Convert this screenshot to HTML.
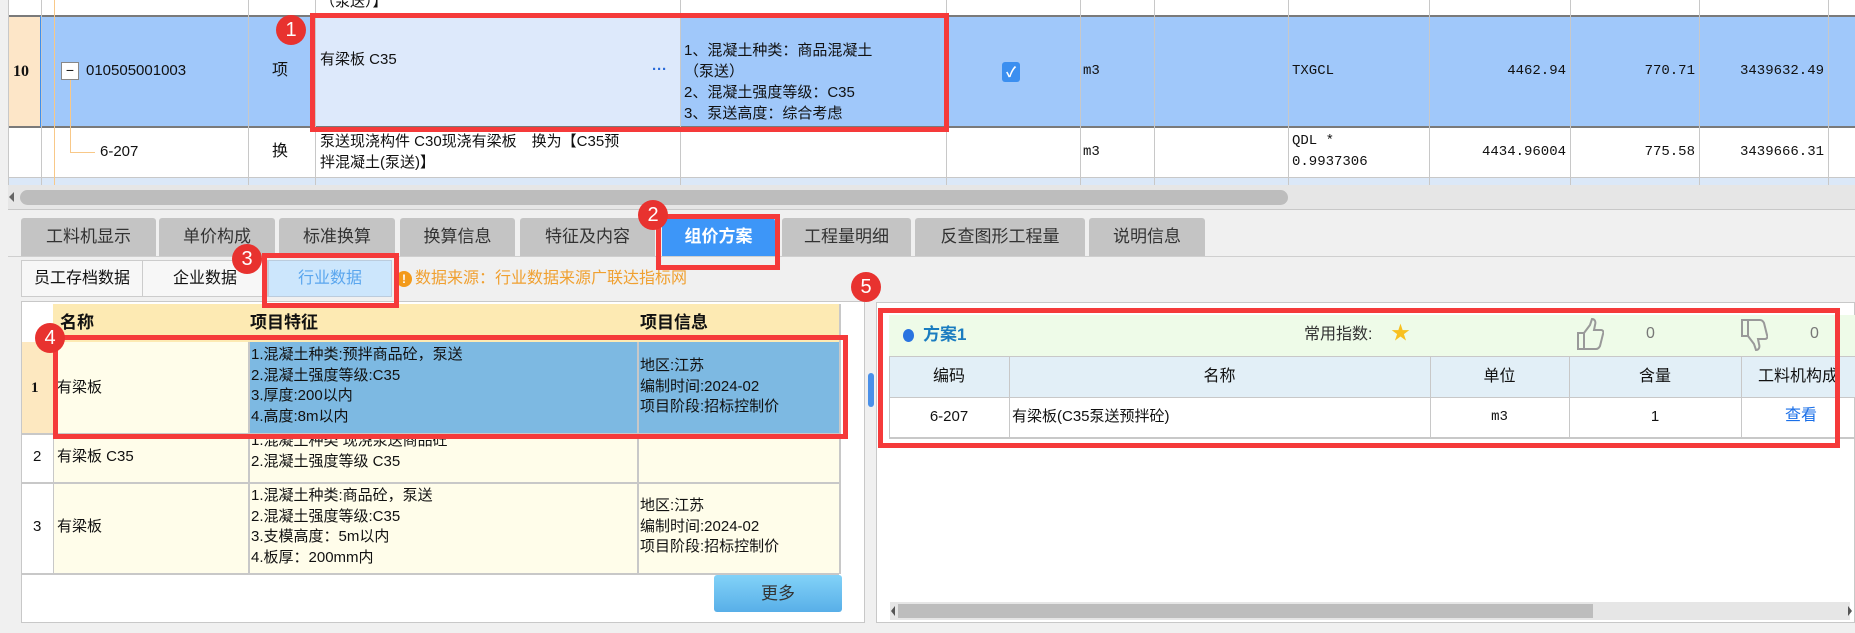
<!DOCTYPE html>
<html><head><meta charset="utf-8">
<style>
*{margin:0;padding:0;box-sizing:border-box}
body{width:1855px;height:633px;overflow:hidden;background:#f0f0f0;position:relative;font-family:"Liberation Sans","Noto Sans CJK SC",sans-serif;font-size:15px;color:#111}
.a{position:absolute}
.t{position:absolute;white-space:nowrap;line-height:20px}
.m{font-family:"Liberation Mono","Noto Sans CJK SC",monospace;font-size:14px}
.vl{position:absolute;width:1px;background:#c8c8c8}
.hl{position:absolute;height:1px;background:#c8c8c8}
.red{position:absolute;border:5px solid #f53a3a}
.badge{position:absolute;width:30px;height:30px;border-radius:50%;background:#e8322f;color:#fff;font-size:20px;line-height:30px;text-align:center}
.tab{position:absolute;top:218px;height:38px;background:#c4c4c4;color:#333;font-size:17px;line-height:38px;text-align:center;border-radius:3px 3px 0 0}
.r{text-align:right}
</style></head><body>
<!-- top table -->
<div class="a" style="left:8px;top:0;width:1847px;height:184px;background:#fff"></div>
<div class="a" style="left:8px;top:16px;width:33px;height:111px;background:#fde6c8"></div>
<div class="a" style="left:41px;top:16px;width:1814px;height:111px;background:#a0c8fa"></div>
<div class="a" style="left:315px;top:16px;width:365px;height:111px;background:#dde9fb"></div>
<div class="a" style="left:8px;top:178px;width:1847px;height:7px;background:#dbe8f8"></div>
<div class="hl" style="left:8px;top:15px;width:1847px;height:2px;background:#7a7a7a"></div>
<div class="hl" style="left:8px;top:126px;width:1847px;height:2px;background:#7a7a7a"></div>
<div class="hl" style="left:8px;top:177px;width:1847px"></div>
<div class="a" style="left:40px;top:16px;width:2px;height:111px;background:#3b8ff0"></div>
<div class="vl" style="left:8px;top:0;height:185px"></div>
<div class="vl" style="left:41px;top:0;height:185px"></div>
<div class="vl" style="left:248px;top:0;height:185px"></div>
<div class="vl" style="left:315px;top:0;height:185px"></div>
<div class="vl" style="left:680px;top:0;height:185px"></div>
<div class="vl" style="left:946px;top:0;height:185px"></div>
<div class="vl" style="left:1080px;top:0;height:185px"></div>
<div class="vl" style="left:1154px;top:0;height:185px"></div>
<div class="vl" style="left:1288px;top:0;height:185px"></div>
<div class="vl" style="left:1429px;top:0;height:185px"></div>
<div class="vl" style="left:1570px;top:0;height:185px"></div>
<div class="vl" style="left:1699px;top:0;height:185px"></div>
<div class="vl" style="left:1828px;top:0;height:185px"></div>
<!-- tree lines -->
<div class="a" style="left:54px;top:0;width:1px;height:185px;background:#f8c888"></div>
<div class="a" style="left:70px;top:80px;width:1px;height:73px;background:#f8c888"></div>
<div class="a" style="left:70px;top:152px;width:25px;height:1px;background:#f8c888"></div>
<div class="t" style="left:320px;top:-8px">（泵送）】</div>
<div class="t" style="left:13px;top:62px;font-weight:bold;font-family:'Liberation Serif',serif;font-size:16px">10</div>
<div class="a" style="left:61px;top:62px;width:18px;height:18px;border:1px solid #888;background:#fff;font-size:14px;line-height:15px;text-align:center">−</div>
<div class="t" style="left:86px;top:61px">010505001003</div>
<div class="t" style="left:272px;top:61px;font-size:16px">项</div>
<div class="t" style="left:320px;top:50px">有梁板 C35</div>
<div class="t" style="left:652px;top:60px;color:#2a6ad8;font-weight:bold">···</div>
<div class="t" style="left:684px;top:40px;line-height:21px">1、混凝土种类：商品混凝土<br>（泵送）<br>2、混凝土强度等级：C35<br>3、泵送高度：综合考虑</div>
<div class="a" style="left:1002px;top:62px;width:18px;height:20px;border-radius:3px;background:#3b8ff0;color:#fff;font-size:14px;line-height:20px;text-align:center;font-weight:bold">✓</div>
<div class="t m" style="left:1083px;top:61px">m3</div>
<div class="t m" style="left:1292px;top:61px">TXGCL</div>
<div class="t m r" style="left:1430px;top:61px;width:136px">4462.94</div>
<div class="t m r" style="left:1571px;top:61px;width:124px">770.71</div>
<div class="t m r" style="left:1700px;top:61px;width:124px">3439632.49</div>
<div class="t" style="left:100px;top:142px">6-207</div>
<div class="t" style="left:272px;top:142px;font-size:16px">换</div>
<div class="t" style="left:320px;top:131px;line-height:21px">泵送现浇构件 C30现浇有梁板　换为【C35预<br>拌混凝土(泵送)】</div>
<div class="t m" style="left:1083px;top:142px">m3</div>
<div class="t m" style="left:1292px;top:131px;line-height:21px">QDL *<br>0.9937306</div>
<div class="t m r" style="left:1430px;top:142px;width:136px">4434.96004</div>
<div class="t m r" style="left:1571px;top:142px;width:124px">775.58</div>
<div class="t m r" style="left:1700px;top:142px;width:124px">3439666.31</div>
<!-- scrollbar -->
<div class="a" style="left:8px;top:185px;width:1847px;height:24px;background:#e6e6e6"></div>
<div class="a" style="left:20px;top:190px;width:1268px;height:15px;border-radius:8px;background:#bdbdbd"></div>
<div class="a" style="left:9px;top:192px;width:0;height:0;border-top:5px solid transparent;border-bottom:5px solid transparent;border-right:5px solid #666"></div>
<div class="hl" style="left:8px;top:209px;width:1847px;background:#c8c8c8"></div>
<!-- tabs -->
<div class="tab" style="left:21px;width:135px">工料机显示</div>
<div class="tab" style="left:159px;width:116px">单价构成</div>
<div class="tab" style="left:279px;width:116px">标准换算</div>
<div class="tab" style="left:400px;width:115px">换算信息</div>
<div class="tab" style="left:520px;width:135px">特征及内容</div>
<div class="tab" style="left:662px;width:113px;background:#3d96f8;color:#fff;font-weight:bold">组价方案</div>
<div class="tab" style="left:782px;width:129px">工程量明细</div>
<div class="tab" style="left:915px;width:170px">反查图形工程量</div>
<div class="tab" style="left:1089px;width:116px">说明信息</div>
<div class="hl" style="left:8px;top:256px;width:1847px;background:#cfcfcf"></div>
<!-- subtabs -->
<div class="a" style="left:21px;top:260px;width:122px;height:37px;border:1px solid #ccc;background:#f7f7f7;font-size:16px;line-height:35px;text-align:center">员工存档数据</div>
<div class="a" style="left:142px;top:260px;width:126px;height:37px;border:1px solid #ccc;background:#f7f7f7;font-size:16px;line-height:35px;text-align:center">企业数据</div>
<div class="a" style="left:268px;top:260px;width:124px;height:37px;border:1px solid #bcd;background:#cce6fc;color:#5aa6ee;font-size:16px;line-height:35px;text-align:center">行业数据</div>
<div class="a" style="left:396px;top:271px;width:16px;height:16px;border-radius:50%;background:#f39a1a;color:#fff;font-size:12px;line-height:16px;text-align:center;font-weight:bold">!</div>
<div class="t" style="left:415px;top:269px;color:#f0a030;font-size:16px">数据来源：行业数据来源广联达指标网</div>
<!-- left panel -->
<div class="a" style="left:21px;top:301px;width:844px;height:322px;background:#fff;border:1px solid #c8c8c8"></div>
<div class="a" style="left:53px;top:304px;width:786px;height:38px;background:#fdeab3"></div>
<div class="a" style="left:22px;top:342px;width:31px;height:91px;background:#fde8c0"></div>
<div class="a" style="left:53px;top:342px;width:195px;height:232px;background:#fffdea"></div>
<div class="a" style="left:248px;top:342px;width:591px;height:232px;background:#fffdea"></div>
<div class="a" style="left:248px;top:342px;width:591px;height:91px;background:#7db9e2"></div>
<div class="hl" style="left:22px;top:433px;width:817px;height:2px"></div>
<div class="hl" style="left:22px;top:482px;width:817px;height:2px"></div>
<div class="hl" style="left:22px;top:573px;width:817px;height:2px"></div>
<div class="vl" style="left:53px;top:342px;height:232px"></div>
<div class="vl" style="left:248px;top:342px;height:232px;width:2px"></div>
<div class="vl" style="left:637px;top:342px;height:232px;width:2px"></div>
<div class="vl" style="left:839px;top:304px;height:270px;width:2px"></div>
<div class="t" style="left:60px;top:313px;font-weight:bold;font-size:17px">名称</div>
<div class="t" style="left:250px;top:313px;font-weight:bold;font-size:17px">项目特征</div>
<div class="t" style="left:640px;top:313px;font-weight:bold;font-size:17px">项目信息</div>
<div class="t" style="left:31px;top:378px;font-weight:bold;font-family:'Liberation Serif',serif">1</div>
<div class="t" style="left:57px;top:378px">有梁板</div>
<div class="t" style="left:251px;top:345px;line-height:20.7px">1.混凝土种类:预拌商品砼，泵送<br>2.混凝土强度等级:C35<br>3.厚度:200以内<br>4.高度:8m以内</div>
<div class="t" style="left:640px;top:356px;line-height:20.7px">地区:江苏<br>编制时间:2024-02<br>项目阶段:招标控制价</div>
<div class="t" style="left:33px;top:447px">2</div>
<div class="t" style="left:57px;top:447px">有梁板 C35</div>
<div class="a" style="left:250px;top:435px;width:387px;height:47px;overflow:hidden"><div class="t" style="left:1px;top:-4px;line-height:20.7px">1.混凝土种类 现浇泵送商品砼<br>2.混凝土强度等级 C35</div></div>
<div class="t" style="left:33px;top:517px">3</div>
<div class="t" style="left:57px;top:517px">有梁板</div>
<div class="t" style="left:251px;top:486px;line-height:20.7px">1.混凝土种类:商品砼，泵送<br>2.混凝土强度等级:C35<br>3.支模高度：5m以内<br>4.板厚：200mm内</div>
<div class="t" style="left:640px;top:496px;line-height:20.7px">地区:江苏<br>编制时间:2024-02<br>项目阶段:招标控制价</div>
<div class="a" style="left:714px;top:575px;width:128px;height:37px;border-radius:3px;background:linear-gradient(#82d2f8,#58afe8);font-size:17px;line-height:37px;text-align:center;color:#333">更多</div>
<!-- splitter -->
<div class="a" style="left:868px;top:373px;width:6px;height:34px;border-radius:3px;background:#4a90e8"></div>
<!-- right panel -->
<div class="a" style="left:876px;top:302px;width:979px;height:321px;background:#fff;border:1px solid #c8c8c8"></div>
<div class="a" style="left:889px;top:315px;width:966px;height:41px;background:#eefbe8"></div>
<div class="a" style="left:903px;top:329px;width:11px;height:13px;border-radius:50%;background:#2a74e0"></div>
<div class="t" style="left:923px;top:325px;color:#1a7cc0;font-weight:bold;font-size:17px">方案1</div>
<div class="t" style="left:1304px;top:325px;font-size:16px;color:#333">常用指数:</div>
<div class="t" style="left:1391px;top:324px;color:#f8c020;font-size:19px">★</div>
<svg class="a" style="left:1576px;top:318px" width="28" height="34" viewBox="0 0 28 34"><path d="M2 15h6v16H2z M8 15l6-8 2-6c3 0 4 3 3 6l-1 5h7c2 0 3 2 2 4l-3 12c-1 2-2 3-4 3H8" fill="none" stroke="#999" stroke-width="2"/></svg>
<div class="t" style="left:1646px;top:324px;font-size:16px;color:#777">0</div>
<svg class="a" style="left:1740px;top:317px" width="28" height="34" viewBox="0 0 28 34"><path d="M2 3h6v16H2z M8 19l6 8 2 6c3 0 4-3 3-6l-1-5h7c2 0 3-2 2-4L24 6c-1-2-2-3-4-3H8" fill="none" stroke="#999" stroke-width="2"/></svg>
<div class="t" style="left:1810px;top:324px;font-size:16px;color:#777">0</div>
<div class="a" style="left:889px;top:356px;width:966px;height:41px;background:#e2eff7"></div>
<div class="hl" style="left:889px;top:356px;width:966px"></div>
<div class="hl" style="left:889px;top:397px;width:966px"></div>
<div class="hl" style="left:889px;top:437px;width:966px;height:2px"></div>
<div class="vl" style="left:889px;top:356px;height:82px"></div>
<div class="vl" style="left:1009px;top:356px;height:82px"></div>
<div class="vl" style="left:1430px;top:356px;height:82px"></div>
<div class="vl" style="left:1569px;top:356px;height:82px"></div>
<div class="vl" style="left:1741px;top:356px;height:82px"></div>
<div class="t" style="left:889px;top:367px;width:120px;text-align:center;font-size:16px">编码</div>
<div class="t" style="left:1009px;top:367px;width:421px;text-align:center;font-size:16px">名称</div>
<div class="t" style="left:1430px;top:367px;width:139px;text-align:center;font-size:16px">单位</div>
<div class="t" style="left:1569px;top:367px;width:172px;text-align:center;font-size:16px">含量</div>
<div class="t" style="left:1758px;top:367px;font-size:16px">工料机构成</div>
<div class="t" style="left:889px;top:407px;width:120px;text-align:center">6-207</div>
<div class="t" style="left:1012px;top:407px">有梁板(C35泵送预拌砼)</div>
<div class="t m" style="left:1430px;top:407px;width:139px;text-align:center">m3</div>
<div class="t" style="left:1569px;top:407px;width:172px;text-align:center">1</div>
<div class="t" style="left:1785px;top:406px;color:#1a6fe8;font-size:16px">查看</div>
<div class="a" style="left:890px;top:602px;width:960px;height:18px;background:#e6e6e6"></div>
<div class="a" style="left:898px;top:604px;width:695px;height:14px;background:#bdbdbd"></div>
<div class="a" style="left:891px;top:606px;width:0;height:0;border-top:5px solid transparent;border-bottom:5px solid transparent;border-right:4px solid #555"></div>
<div class="a" style="left:1848px;top:606px;width:0;height:0;border-top:5px solid transparent;border-bottom:5px solid transparent;border-left:4px solid #555"></div>
<!-- red boxes & badges -->
<div class="red" style="left:310px;top:13px;width:639px;height:119px"></div>
<div class="red" style="left:656px;top:214px;width:124px;height:56px"></div>
<div class="red" style="left:262px;top:253px;width:137px;height:55px"></div>
<div class="red" style="left:53px;top:335px;width:795px;height:104px"></div>
<div class="red" style="left:878px;top:308px;width:962px;height:140px"></div>
<div class="badge" style="left:276px;top:15px">1</div>
<div class="badge" style="left:638px;top:200px">2</div>
<div class="badge" style="left:232px;top:244px">3</div>
<div class="badge" style="left:35px;top:323px">4</div>
<div class="badge" style="left:851px;top:272px">5</div>
</body></html>
